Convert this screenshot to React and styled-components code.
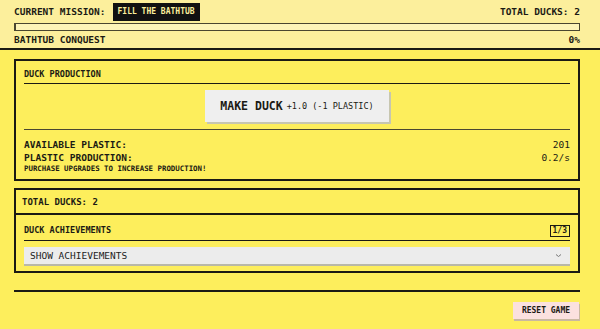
import React from 'react'
import styled, { createGlobalStyle } from 'styled-components'

const Global = createGlobalStyle`
    html, body {
        margin: 0;
        padding: 0;
        background: #fdee5c;
    }
    body {
        font-family: "DejaVu Sans Mono", "Liberation Mono", monospace;
        color: #1b1a14;
        width: 600px;
        height: 329px;
        overflow: hidden;
    }
`

const Header = styled.header`
    background: #fcef9c;
    border-bottom: 2px solid #1b1a14;
    padding: 0 20px 0 14px;
    height: 48px;
    display: flex;
    flex-direction: column;
`

const Row = styled.div`
    display: flex;
    justify-content: space-between;
    align-items: center;
    font-size: ${p => p.size || 9.5}px;
    font-weight: bold;
    height: ${p => p.h}px;
`

const Label = styled.span`
    display: flex;
    align-items: center;
    gap: 7px;
`

const Badge = styled.span`
    background: #111;
    color: #fcef9c;
    font-size: 8px;
    padding: 5px 5px;
    line-height: 1;
`

const Track = styled.div`
    height: 6px;
    border: 1px solid #4a4630;
    border-left-width: 2px;
    background: #fdf4b8;
`

const Main = styled.main`
    padding: 9px 20px 0 14px;
`

const Panel = styled.section`
    border: 2px solid #1b1a14;
    border-top-width: ${p => (p.flush ? 0 : 2)}px;
    padding: ${p => p.pad || '0 8px 5px'};
    margin-top: ${p => p.mt || 0}px;
`

const PanelTitle = styled.div`
    display: flex;
    justify-content: space-between;
    align-items: center;
    font-size: 8.5px;
    font-weight: bold;
    height: ${p => p.h || 19}px;
    border-bottom: 1.5px solid #1b1a14;
    padding-top: ${p => p.top || 3}px;
`

const ButtonRow = styled.div`
    display: flex;
    justify-content: center;
    padding: 6px 0 7px;
    border-bottom: 1.5px solid #4a4630;
`

const MakeButton = styled.button`
    font-family: inherit;
    background: #efefef;
    border: none;
    box-shadow: 2px 2px 0 #c7c6b0;
    width: 184px;
    height: 32px;
    color: #1b1a14;
    display: flex;
    align-items: center;
    justify-content: center;
    gap: 4px;
    b {
        font-size: 11.5px;
    }
    span {
        font-size: 8.5px;
    }
`

const Stat = styled.div`
    display: flex;
    justify-content: space-between;
    font-size: 9.5px;
    font-weight: bold;
    line-height: 13px;
    span:last-child {
        font-weight: normal;
    }
`

const Stats = styled.div`
    padding-top: 8px;
`

const Note = styled.div`
    font-size: 7.4px;
    font-weight: bold;
    line-height: 10px;
`

const CountBadge = styled.span`
    border: 1.5px solid #1b1a14;
    font-size: 8px;
    padding: 1px 2px;
    line-height: 1;
    margin-top: 1px;
`

const Select = styled.div`
    margin-top: 6px;
    background: #ececec;
    box-shadow: 0 2px 0 #b9b8a8;
    height: 17px;
    display: flex;
    justify-content: space-between;
    align-items: center;
    padding: 0 8px 0 6px;
    font-size: 9.5px;
    color: #222;
`

const Chevron = styled.svg`
    width: 7px;
    height: 5px;
`

const Divider = styled.hr`
    border: none;
    border-top: 2px solid #1b1a14;
    margin: 17px 0 0;
`

const Footer = styled.div`
    display: flex;
    justify-content: flex-end;
    padding-top: 10px;
`

const ResetButton = styled.button`
    font-family: inherit;
    font-weight: bold;
    font-size: 8px;
    background: #fbe1df;
    border: none;
    box-shadow: 1px 2px 0 #c9b9a0;
    width: 66px;
    height: 17px;
    color: #1b1a14;
    margin-right: 1px;
`

export default function App() {
    return (
        <>
            <Global />
            <Header>
                <Row h={24}>
                    <Label>CURRENT MISSION: <Badge>FILL THE BATHTUB</Badge></Label>
                    <span>TOTAL DUCKS: 2</span>
                </Row>
                <Track />
                <Row h={17}>
                    <span>BATHTUB CONQUEST</span>
                    <span>0%</span>
                </Row>
            </Header>
            <Main>
                <Panel>
                    <PanelTitle>DUCK PRODUCTION</PanelTitle>
                    <ButtonRow>
                        <MakeButton>
                            <b>MAKE DUCK</b>
                            <span>+1.0 (-1 PLASTIC)</span>
                        </MakeButton>
                    </ButtonRow>
                    <Stats>
                        <Stat><span>AVAILABLE PLASTIC:</span><span>201</span></Stat>
                        <Stat><span>PLASTIC PRODUCTION:</span><span>0.2/s</span></Stat>
                        <Note>PURCHASE UPGRADES TO INCREASE PRODUCTION!</Note>
                    </Stats>
                </Panel>
                <Panel mt={7} pad="0 6px">
                    <Row h={23} size={9}>TOTAL DUCKS: 2</Row>
                </Panel>
                <Panel flush pad="0 8px 7px">
                    <PanelTitle h={20} top={5}>
                        DUCK ACHIEVEMENTS
                        <CountBadge>1/3</CountBadge>
                    </PanelTitle>
                    <Select>
                        SHOW ACHIEVEMENTS
                        <Chevron viewBox="0 0 7 5">
                            <path d="M1 1.5 L3.5 3.5 L6 1.5" stroke="#777" strokeWidth="1" fill="none" />
                        </Chevron>
                    </Select>
                </Panel>
                <Divider />
                <Footer>
                    <ResetButton>RESET GAME</ResetButton>
                </Footer>
            </Main>
        </>
    )
}
